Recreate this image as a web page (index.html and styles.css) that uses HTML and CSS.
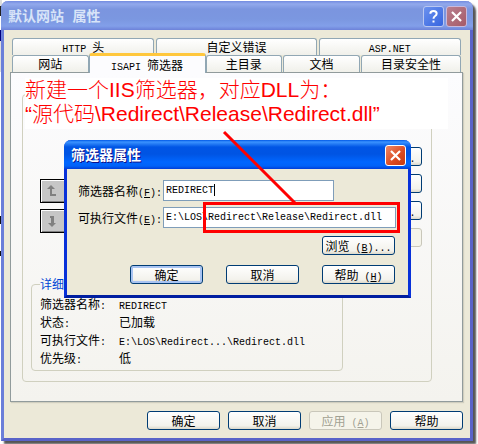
FILE: index.html
```html
<!DOCTYPE html>
<html lang="zh-CN">
<head>
<meta charset="utf-8">
<title>默认网站 属性</title>
<link rel="stylesheet" href="styles.css">
</head>
<body>
<main class="window">
  <header class="titlebar">
    <h1>默认网站 属性</h1>
    <button class="cap help" type="button" aria-label="帮助">
      <svg viewBox="0 0 21 21"><path d="M7 7.5Q7 4.5 10.5 4.5T14 7.5Q14 9 12 10.2Q10.5 11.2 10.5 13M10.5 15v2.2" fill="none" stroke="#fff" stroke-width="2.2"/></svg>
    </button>
    <button class="cap shut" type="button" aria-label="关闭">
      <svg viewBox="0 0 21 21"><path d="M5.5 5.5l10 10M15.5 5.5l-10 10" stroke="#fff" stroke-width="2.4"/></svg>
    </button>
  </header>
  <div class="content">
    <nav class="tabs">
      <div class="tab-row back">
        <button class="tab wide" type="button"><span class="en">HTTP </span>头</button>
        <button class="tab wider" type="button">自定义错误</button>
        <button class="tab wide" type="button"><span class="en">ASP.NET</span></button>
      </div>
      <div class="tab-row">
        <button class="tab narrow" type="button">网站</button>
        <button class="tab medium active" type="button"><span class="en">ISAPI </span>筛选器</button>
        <button class="tab narrow" type="button">主目录</button>
        <button class="tab narrow" type="button">文档</button>
        <button class="tab large" type="button">目录安全性</button>
      </div>
    </nav>
    <section class="panel">
      <div class="group">
        <div class="tools">
          <div class="order">
            <button type="button" aria-label="上移"><svg viewBox="0 0 14 14"><path d="M6 1l4 4H7v5h4v2H5V5H2z" fill="#808080"/></svg></button>
            <button type="button" aria-label="下移"><svg viewBox="0 0 14 14"><path d="M7 13l4-4H9V2H5v2h1v5H3z" fill="#808080"/></svg></button>
          </div>
          <div class="side">
            <button class="btn" type="button">添加<span class="en">(<u>D</u>)...</span></button>
            <button class="btn" type="button" aria-label="删除"></button>
            <button class="btn" type="button">编辑<span class="en">(<u>I</u>)...</span></button>
            <button class="btn" type="button" aria-label="启用" disabled></button>
          </div>
        </div>
        <fieldset class="details">
          <legend>详细信息</legend>
          <dl>
            <dt>筛选器名称<span class="en">:</span></dt><dd><span class="en">REDIRECT</span></dd>
            <dt>状态<span class="en">:</span></dt><dd>已加载</dd>
            <dt>可执行文件<span class="en">:</span></dt><dd><span class="en">E:\LOS\Redirect...\Redirect.dll</span></dd>
            <dt>优先级<span class="en">:</span></dt><dd>低</dd>
          </dl>
        </fieldset>
      </div>
    </section>
    <footer class="actions">
      <button class="btn" type="button">确定</button>
      <button class="btn" type="button">取消</button>
      <button class="btn" type="button" disabled>应用<span class="en">&nbsp;(<u>A</u>)</span></button>
      <button class="btn" type="button">帮助</button>
    </footer>
  </div>
</main>

<p class="note">新建一个IIS筛选器，对应DLL为：<br>“源代码\Redirect\Release\Redirect.dll”</p>

<form class="dialog">
  <header class="dialog-title">
    <h2>筛选器属性</h2>
    <button class="cap close" type="button" aria-label="关闭">
      <svg viewBox="0 0 21 21"><path d="M5.5 5.5l10 10M15.5 5.5l-10 10" stroke="#fff" stroke-width="2.4"/></svg>
    </button>
  </header>
  <div class="dialog-body">
    <div class="field">
      <label for="name">筛选器名称<span class="en">(<u>F</u>):</span></label>
      <span class="entry short"><input id="name" type="text" value="REDIRECT"><i class="caret"></i></span>
    </div>
    <div class="field">
      <label for="file">可执行文件<span class="en">(<u>E</u>):</span></label>
      <span class="entry"><input id="file" type="text" value="E:\LOS\Redirect\Release\Redirect.dll"><i class="frame"></i></span>
    </div>
    <div class="dialog-row browse"><button class="btn" type="button">浏览<span class="en">&nbsp;(<u>B</u>)...</span></button></div>
    <div class="dialog-row">
      <button class="btn default" type="button">确定</button>
      <button class="btn" type="button">取消</button>
      <button class="btn" type="button">帮助<span class="en">&nbsp;(<u>H</u>)</span></button>
    </div>
  </div>
</form>
<svg class="pointer" viewBox="0 0 76 76" aria-hidden="true"><path d="M2 2L74 74" stroke="#f00" stroke-width="3"/></svg>
</body>
</html>
```
FILE: styles.css
```css
* { box-sizing: border-box; }

body {
  margin: 0;
  padding: 1px 5px 4px 1px;
  position: relative;
  background: linear-gradient(#ddd 0 6px, #222 6px 16px, #fff 16px 30px, #00007b 30px 41px, #ddd 41px 72px, #fff 72px 216px, #111 216px 224px, #fff 224px 251px, #111 251px 256px, #fff 256px) left top / 2px 444px no-repeat, #fff;
  font: 12px/18px "Noto Sans CJK SC", sans-serif;
  color: #000;
}

button, input { font: inherit; color: inherit; margin: 0; padding: 0; }
h1, h2, p, dl, dd, fieldset { margin: 0; padding: 0; }
svg { display: block; }
u { text-underline-offset: 1px; }
.en { font-family: "Liberation Mono", monospace; font-size: 10px; line-height: 1; white-space: pre; }

.window {
  border: solid #6b7fd9;
  border-width: 0 3px 3px;
  border-right-color: #5963c8;
  border-bottom-color: #5963c8;
  border-radius: 7px 7px 0 0;
  background: #ece9d8;
  box-shadow: 3px 3px 2px #555;
}

.titlebar {
  display: flex;
  align-items: center;
  gap: 2px;
  height: 29px;
  margin: 0 -3px;
  padding: 2px 6px 0 7px;
  border-radius: 7px 7px 0 0;
  background: linear-gradient(#738be0, #92a9ec 3px, #7b95df 8px, #7b97e0 18px, #829fe9 25px, #6d82d9);
}
.titlebar h1, .dialog-title h2 {
  flex: 1;
  font: bold 14px/20px "Liberation Mono", "Noto Sans CJK SC", sans-serif;
  color: #d8e4f8;
}

.cap { width: 21px; height: 21px; border: 1px solid #fff; border-radius: 3px; }
.cap svg { width: 19px; height: 19px; }
.help { border-color: #b9c7f2; background: linear-gradient(135deg, #6b91ee, #3665e0); }
.shut { border-color: #c9b9dc; background: linear-gradient(135deg, #b9808f, #a65a68); }
.close { background: linear-gradient(135deg, #ee8867, #da4a20 60%, #c53a12); }

.content { padding: 8px 7px 8px 6px; }
.tabs { padding: 0 2px; }
.tab-row { display: flex; align-items: flex-end; gap: 1px; height: 17px; }
.tab-row.back { gap: 2px; }
.tab {
  flex: 76 1 0;
  height: 17px;
  line-height: 16px;
  border: 1px solid #91a7b4;
  border-bottom: 0;
  border-radius: 3px 3px 0 0;
  background: linear-gradient(#fff, #f0f0ea);
}
.wide { flex-grow: 142; }
.wider { flex-grow: 160; }
.medium { flex-grow: 117; }
.large { flex-grow: 100; }
.tab.active {
  position: relative;
  height: 20px;
  margin: 0 -1px -1px;
  border-top: 3px solid #ffc73c;
  background: #fcfcfe;
}

.panel {
  padding: 21px 30px 19px 11px;
  border: 1px solid #919b9c;
  background: linear-gradient(#fcfcfe, #f4f3ee);
  box-shadow: 1px 1px 1px #d0cebf;
}
.group { padding: 52px 9px 10px 8px; border: 1px solid #d0d0bf; border-radius: 4px; }
.tools { display: flex; justify-content: space-between; padding-left: 9px; }
.order { display: grid; gap: 6px; align-content: start; padding-top: 32px; }
.order button {
  width: 32px;
  height: 24px;
  padding-left: 4px;
  border: 1px solid #000;
  background: #c6c6c6;
  box-shadow: inset 1px 1px #fff, inset -1px -1px #808080;
}
.order svg { width: 14px; height: 14px; }
.side { display: grid; gap: 8px; }

.btn {
  width: 73px;
  height: 19px;
  line-height: 16px;
  white-space: nowrap;
  border: 1px solid #003c74;
  border-radius: 3px;
  background: linear-gradient(#fff, #f3f2ec 80%, #dcd8ca);
}
.btn.default { box-shadow: inset 0 0 0 2px #a9c4f2; }
.btn:disabled { border-color: #c9c7ba; color: #a1a192; background: #f5f4ea; }

.details {
  min-width: 0;
  width: calc(100% - 79px);
  margin-top: 30px;
  padding: 0 8px 3px;
  border: 1px solid #d0d0bf;
  border-radius: 4px;
}
.details legend { padding: 0; line-height: 14px; color: #0046d5; }
.details dl { display: grid; grid-template-columns: 79px 1fr; grid-auto-rows: 18px; padding-top: 4px; }

.actions { display: flex; justify-content: flex-end; gap: 8px; padding-top: 9px; }

.note {
  position: absolute;
  top: 78px;
  left: 25px;
  right: 30px;
  height: 51px;
  background: #fff;
  color: #f00;
  font: 21px/24px "Liberation Sans", "Noto Sans CJK SC", sans-serif;
  font-weight: 300;
  white-space: nowrap;
}

.dialog {
  position: absolute;
  top: 140px;
  left: 64px;
  right: 67px;
  border: solid #0831d9;
  border-width: 0 3px 3px;
  border-bottom-color: #001ea0;
  border-radius: 7px 7px 0 0;
  background: #ece9d8;
}
.dialog-title {
  display: flex;
  align-items: center;
  height: 29px;
  margin: 0 -3px;
  padding: 2px 5px 0 7px;
  border-radius: 7px 7px 0 0;
  background: linear-gradient(#0058e6, #3a93ff 2px, #0055e5 7px, #0054e3 14px, #0066ff 22px, #0062f8 26px, #003dd7);
}
.dialog-title h2 { color: #fff; text-shadow: 1px 1px #0f1089; }
.dialog-body { display: grid; gap: 6px; padding: 11px 12px 11px 11px; }
.field { display: flex; align-items: center; height: 21px; }
.field label { flex: 0 0 85px; line-height: 18px; }
.entry { position: relative; flex: 1; height: 21px; }
.entry.short { flex: 0 0 171px; }
.entry input {
  display: block;
  width: 100%;
  height: 21px;
  padding: 0 2px;
  border: 1px solid #7f9db9;
  border-radius: 0;
  background: #fff;
  font: 10px/18px "Liberation Mono", monospace;
}
.caret { position: absolute; left: 51px; top: 4px; width: 1px; height: 12px; background: #000; }
.frame { position: absolute; left: 40px; right: -4px; top: -5px; bottom: -5px; border: 3px solid #f00; }
.dialog-row { display: flex; justify-content: flex-end; gap: 23px; padding: 4px 1px 0 0; }
.dialog-row.browse { padding-top: 2px; }

.pointer { position: absolute; left: 222px; top: 130px; width: 76px; height: 76px; }
```
